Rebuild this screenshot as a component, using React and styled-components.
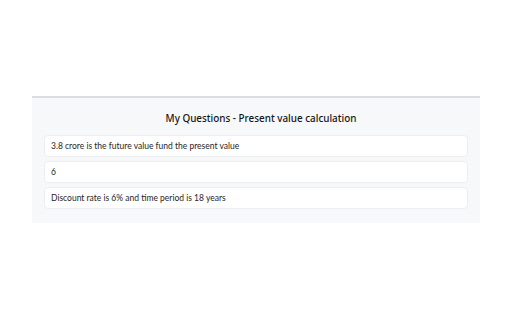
import React from "react";
import styled, { createGlobalStyle } from "styled-components";

const Global = createGlobalStyle`
  html, body { margin: 0; padding: 0; background: #ffffff; }
  body { width: 512px; height: 320px; font-family: Lato, "Noto Sans", sans-serif; }
`;

const Page = styled.div`
  padding: 96px 32px 0 32px;
`;

const Panel = styled.section`
  background: #f7f8fa;
  border-top: 2px solid #dcdde0;
  padding: 10px 12px 14px 12px;
  display: flex;
  flex-direction: column;
`;

const Title = styled.h2`
  margin: 0 0 7px 0;
  padding-left: 10px;
  text-align: center;
  font-family: "Noto Sans", sans-serif;
  font-size: 9.9px;
  font-weight: 500;
  color: #161616;
  line-height: 20px;
`;

const List = styled.div`
  display: flex;
  flex-direction: column;
  gap: 4px;
`;

const Row = styled.div`
  height: 22px;
  box-sizing: border-box;
  background: #ffffff;
  border: 1px solid #eceef1;
  border-radius: 4px;
  padding: 0 6px;
  display: flex;
  align-items: center;
  font-size: 8.5px;
  color: #262626;
`;

const items = [
  "3.8 crore is the future value fund the present value",
  "6",
  "Discount rate is 6% and time period is 18 years",
];

export default function App() {
  return (
    <>
      <Global />
      <Page>
        <Panel>
          <Title>My Questions - Present value calculation</Title>
          <List>
            {items.map((t, i) => (
              <Row key={i}>{t}</Row>
            ))}
          </List>
        </Panel>
      </Page>
    </>
  );
}
